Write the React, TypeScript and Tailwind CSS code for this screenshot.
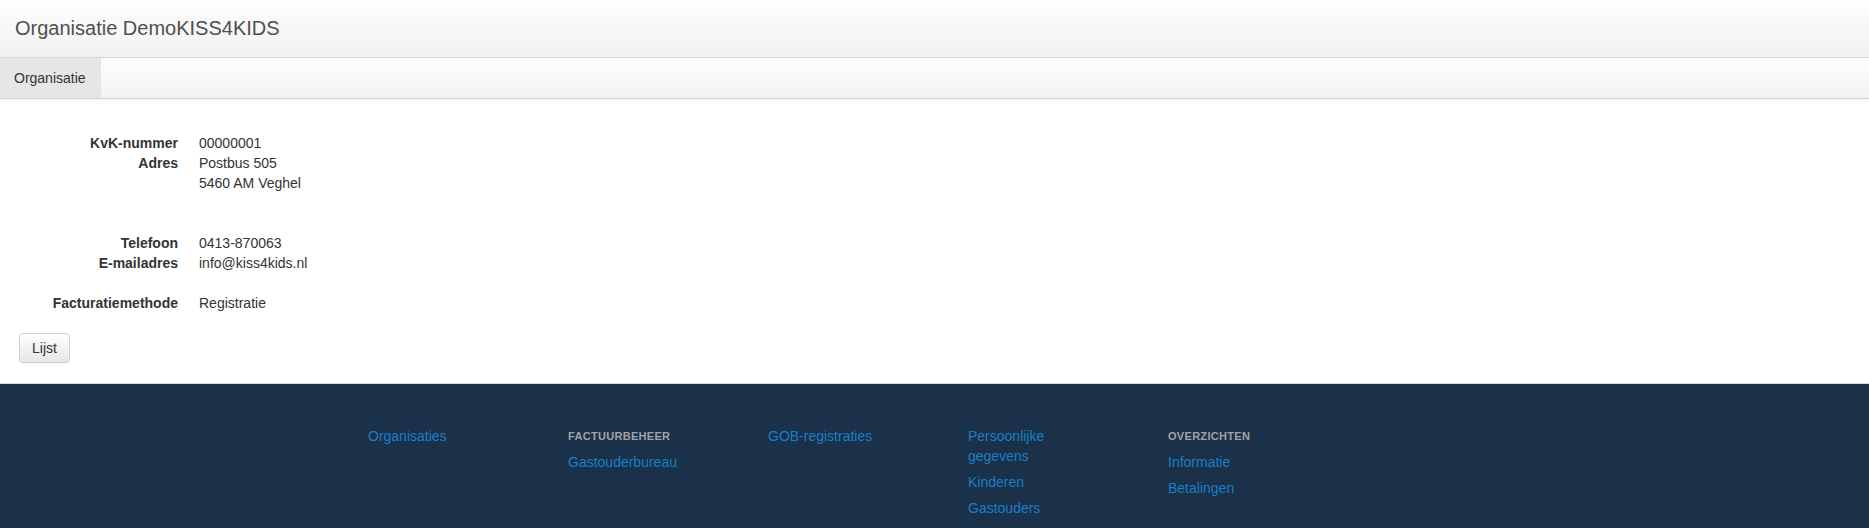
import React from "react";

const font = { fontFamily: '"Liberation Sans", Arial, sans-serif' };

function Row({ label, children }: { label?: string; children?: React.ReactNode }) {
  return (
    <div className="flex leading-[20px]">
      <div className="w-[160px] shrink-0 text-right font-bold text-[#333]">{label}</div>
      <div className="ml-[21px] text-[#333]">{children}</div>
    </div>
  );
}

function FooterLink({ children }: { children: React.ReactNode }) {
  return <a className="block leading-[20px] text-[14px] text-[#1a7fc8] mb-[6px]">{children}</a>;
}

function FooterHead({ children }: { children: React.ReactNode }) {
  return (
    <div className="leading-[20px] text-[11px] font-bold uppercase text-[#a3a3a3] mb-[6px] tracking-[0.3px]">
      {children}
    </div>
  );
}

export default function App() {
  return (
    <div className="min-h-[528px] bg-white text-[14px]" style={font}>
      <header className="h-[58px] border-b border-[#d6d6d6] bg-gradient-to-b from-[#fefefe] to-[#f1f1f1] flex items-center px-[15px]">
        <div className="text-[20px] text-[#4f4f4f] leading-none -mt-[2px]">Organisatie DemoKISS4KIDS</div>
      </header>
      <nav className="h-[41px] border-b border-[#d4d4d4] bg-gradient-to-b from-[#fefefe] to-[#f2f2f2] flex shadow-[0_1px_2px_rgba(0,0,0,0.06)]">
        <div className="h-full w-[101px] bg-[#e6e6e6] flex items-center pl-[14px] text-[14px] text-[#333]">
          Organisatie
        </div>
      </nav>
      <main className="pt-[34px] pb-[20px] pl-[18px] h-[284px]">
        <Row label="KvK-nummer">00000001</Row>
        <Row label="Adres">
          Postbus 505
          <br />
          5460 AM Veghel
        </Row>
        <div className="h-[40px]" />
        <Row label="Telefoon">0413-870063</Row>
        <Row label="E-mailadres">info@kiss4kids.nl</Row>
        <div className="h-[20px]" />
        <Row label="Facturatiemethode">Registratie</Row>
        <button className="mt-[20px] ml-[1px] h-[30px] w-[51px] rounded-[4px] border border-[#cfcfcf] bg-gradient-to-b from-white to-[#e6e6e6] text-[14px] text-[#333] shadow-[0_1px_1px_rgba(0,0,0,0.05)]">
          Lijst
        </button>
      </main>
      <footer className="border-t border-[#d9d9d9] bg-[#1b3049] h-[146px] pt-[42px]">
        <div className="mx-auto w-[1133px] flex">
          <div className="w-[200px]">
            <FooterLink>Organisaties</FooterLink>
          </div>
          <div className="w-[168px] mr-[32px]">
            <FooterHead>Factuurbeheer</FooterHead>
            <FooterLink>Gastouderbureau</FooterLink>
          </div>
          <div className="w-[200px]">
            <FooterLink>GOB-registraties</FooterLink>
          </div>
          <div className="w-[90px] mr-[110px]">
            <FooterLink>Persoonlijke gegevens</FooterLink>
            <FooterLink>Kinderen</FooterLink>
            <FooterLink>Gastouders</FooterLink>
          </div>
          <div className="w-[200px]">
            <FooterHead>Overzichten</FooterHead>
            <FooterLink>Informatie</FooterLink>
            <FooterLink>Betalingen</FooterLink>
          </div>
        </div>
      </footer>
    </div>
  );
}
